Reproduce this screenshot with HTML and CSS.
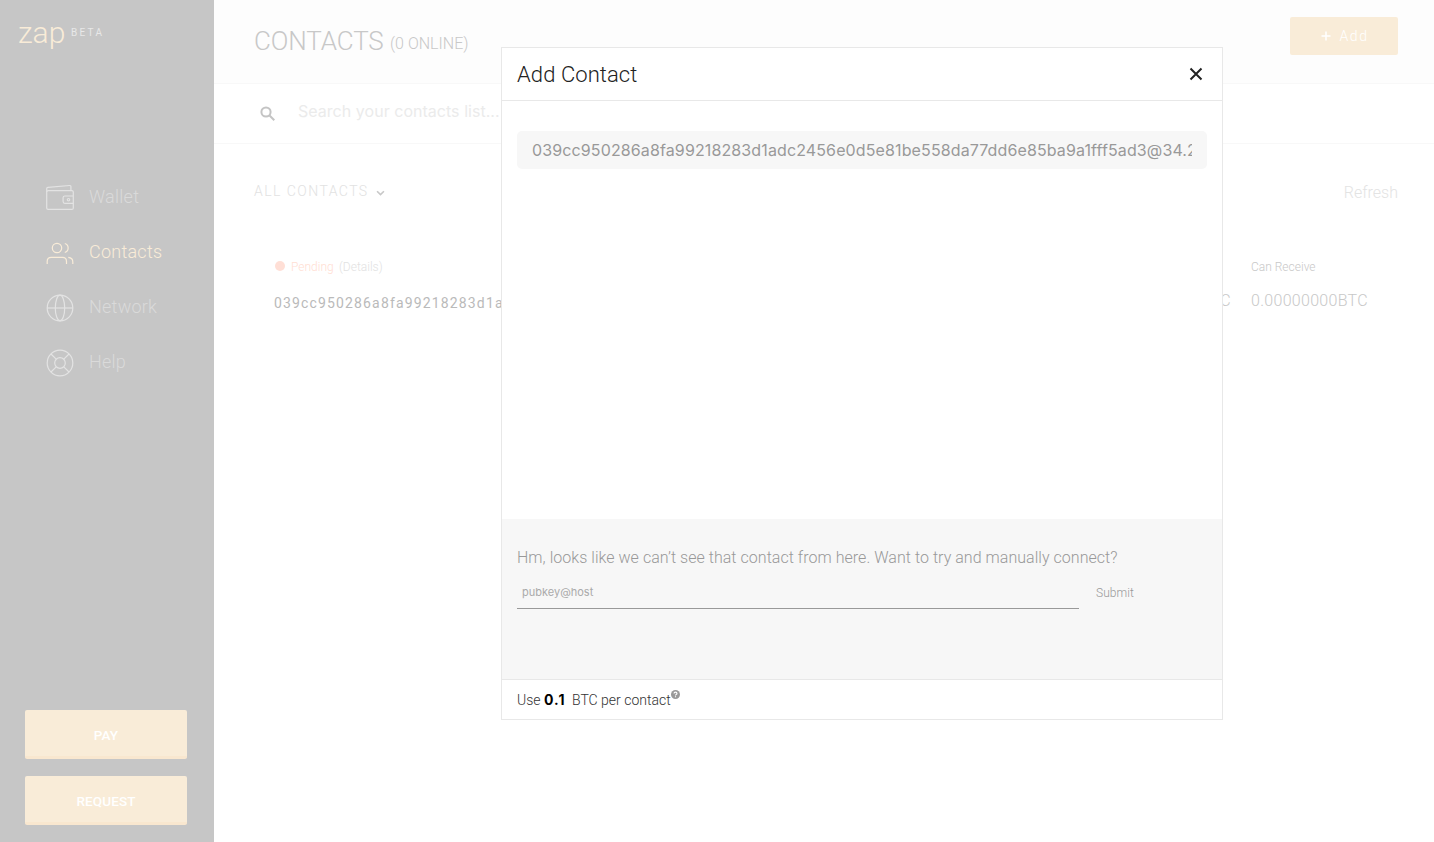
FILE: index.html
```html
<!DOCTYPE html>
<html lang="en">
<head>
<meta charset="utf-8">
<title>Zap</title>
<link rel="stylesheet" href="styles.css">
</head>
<body>
<div class="app">
  <aside class="sidebar">
    <div class="brand"><span class="brand-name">zap</span><span class="brand-tag">BETA</span></div>
    <nav class="nav">
      <a class="nav-item">
        <svg class="nav-icon" viewBox="0 0 28 28"><rect x="0.7" y="6.600" width="26.600" height="18.800" rx="1.5"/><path d="M0.700 8V4.800Q0.700 3.500 2 3.400L23.500 1.500Q24.900 1.400 24.900 2.600V6.600"/><path d="M27.300 12h-8.400q-1.800 0-1.800 1.800v3.800q0 1.800 1.800 1.800h8.400"/><circle cx="22.500" cy="15.700" r="1.200"/></svg>
        <span class="nav-label">Wallet</span>
      </a>
      <a class="nav-item active">
        <svg class="nav-icon" viewBox="0 0 28 28"><circle cx="11" cy="9" r="4.700"/><path d="M1.200 25v-2.600q0-4 4-4H16.500q4 0 4 4V25"/><path d="M18.800 4.500a4.700 4.700 0 0 1 0 9M22.300 18.400q4.500 0.500 4.500 4.500V25"/></svg>
        <span class="nav-label">Contacts</span>
      </a>
      <a class="nav-item">
        <svg class="nav-icon" viewBox="0 0 28 28"><circle cx="14" cy="14" r="12.800"/><path d="M1.200 14h25.600"/><ellipse cx="14" cy="14" rx="4.700" ry="12.800"/></svg>
        <span class="nav-label">Network</span>
      </a>
      <a class="nav-item">
        <svg class="nav-icon" viewBox="0 0 28 28"><circle cx="14" cy="14" r="12.800"/><circle cx="14" cy="14" r="5.300"/><path d="M5 5l5.200 5.200M23 5l-5.200 5.200M5 23l5.200-5.200M23 23l-5.200-5.200"/></svg>
        <span class="nav-label">Help</span>
      </a>
    </nav>
    <div class="actions"><div class="action">PAY</div><div class="action">REQUEST</div></div>
  </aside>
  <main class="main">
    <header class="header">
      <h1 class="title">CONTACTS</h1><span class="online">(0 ONLINE)</span>
      <div class="add"><svg class="add-icon" viewBox="0 0 10 10"><path d="M5 0.500v9M0.500 5h9"/></svg><span>Add</span></div>
    </header>
    <div class="search">
      <svg class="search-icon" viewBox="0 0 16 16"><circle cx="6" cy="6" r="4.600"/><path d="M9.300 9.300l5 5"/></svg>
      <span class="search-text">Search your contacts list...</span>
    </div>
    <div class="filters">
      <span class="filter">ALL CONTACTS</span>
      <svg class="chevron" viewBox="0 0 10 6"><path d="M1.200 1l3.800 3.800L8.800 1"/></svg>
      <span class="refresh">Refresh</span>
    </div>
    <div class="contact">
      <div class="contact-info">
        <div class="status"><i class="dot"></i><span class="pending">Pending</span><span class="details">(Details)</span></div>
        <div class="pubkey">039cc950286a8fa99218283d1adc2456e0d5e81be558</div>
      </div>
      <div class="limit send"><div class="limit-label">Can Pay</div><div class="limit-value">0.00000000BTC</div></div>
      <div class="limit"><div class="limit-label">Can Receive</div><div class="limit-value">0.00000000BTC</div></div>
    </div>
  </main>
</div>
<section class="modal">
  <header class="modal-header">
    <h2 class="modal-title">Add Contact</h2>
    <svg class="close" viewBox="0 0 14 14"><path d="M1.500 1.500l11 11M12.500 1.500l-11 11"/></svg>
  </header>
  <div class="modal-body">
    <div class="key-field"><div class="key-text">039cc950286a8fa99218283d1adc2456e0d5e81be558da77dd6e85ba9a1fff5ad3@34.2</div></div>
  </div>
  <div class="manual">
    <p class="manual-text">Hm, looks like we can’t see that contact from here. Want to try and manually connect?</p>
    <div class="manual-form"><div class="host">pubkey@host</div><span class="submit">Submit</span></div>
  </div>
  <footer class="modal-footer">
    <span class="use">Use</span><b class="amount">0.1</b><span class="per">BTC per contact</span>
    <svg class="help" viewBox="0 0 8 8"><circle cx="4" cy="4" r="4"/><path d="M2.700 3.200q0-1.300 1.300-1.300t1.300 1.200q0 .600-.800 1-.5.300-.5.800M4 5.600v.900"/></svg>
  </footer>
</section>
</body>
</html>
```
FILE: styles.css
```css
* { box-sizing: border-box; }
body { margin: 0; height: 842px; overflow: hidden; background: #fff; font-family: Roboto, "Liberation Sans", sans-serif; font-weight: 300; white-space: nowrap; }
svg { flex: none; fill: none; stroke: currentColor; }
h1, h2, p { margin: 0; font-weight: 300; }
.app { display: flex; height: 842px; }

.sidebar { display: flex; flex-direction: column; width: 214px; background: #c6c6c6; color: #dadada; }
.brand { display: flex; height: 170px; padding: 15px 0 0 18px; }
.brand-name { width: 53px; font-size: 30px; line-height: 36px; color: #f9ecd8; }
.brand-tag { font-size: 10px; line-height: 12px; padding-top: 12px; letter-spacing: 2.3px; font-weight: 400; color: #e8e8e8; }
.nav { display: flex; flex-direction: column; }
.nav-item { display: flex; align-items: center; gap: 15px; height: 55px; padding-left: 46px; font-size: 18px; letter-spacing: 0.25px; }
.nav-label { padding-bottom: 2px; }
.nav-icon { width: 28px; height: 28px; stroke-width: 1.2; color: #e3e3e3; }
.nav-item.active, .active .nav-icon { color: #f9ecd8; }
.actions { display: flex; flex-direction: column; gap: 17px; margin-top: auto; padding: 0 27px 17px 25px; }
.action { height: 49px; border-radius: 2px; border-bottom: 3px solid #f9e7cf; background: #f9ecd8; color: #fff; font-size: 13.5px; font-weight: 500; line-height: 50px; letter-spacing: 0.1px; text-align: center; }

.main { flex: 1; color: #c8c8c8; }
.header { display: flex; height: 84px; padding: 0 36px 0 40px; border-bottom: 1px solid #f8f8f8; background: #fdfdfd; }
.title { width: 136px; font-size: 26px; line-height: 83px; letter-spacing: -0.1px; }
.online { font-size: 16px; line-height: 87px; }
.add { display: flex; align-items: center; justify-content: center; gap: 8px; width: 108px; height: 38px; margin: 17px 0 0 auto; padding-left: 2px; border-radius: 2px; background: #f9ecd8; color: #fff; font-size: 14px; letter-spacing: 1.6px; }
.add-icon { width: 10px; height: 10px; stroke-width: 1.5; }
.search { display: flex; height: 60px; padding-left: 46px; border-bottom: 1px solid #f8f8f8; }
.search-icon { width: 16px; height: 16px; margin: 22px 22px 0 0; stroke-width: 2; color: #c4c4c4; }
.search-text { font-family: Inter, Roboto, sans-serif; font-size: 16px; font-weight: 400; line-height: 55px; letter-spacing: 0.03px; color: #ebebeb; }
.filters { display: flex; align-items: center; height: 96px; padding: 0 36px 0 40px; }
.filter { width: 122px; padding-bottom: 2px; font-size: 14px; letter-spacing: 1.45px; color: #e2e2e2; }
.chevron { width: 9px; height: 6px; margin-top: 1px; stroke-width: 1.8; }
.refresh { margin-left: auto; font-size: 16px; color: #e3e3e3; }
.contact { display: flex; padding: 20px 36px 0 60px; }
.contact-info { flex: 1; min-width: 0; margin-top: -1px; overflow: hidden; }
.status { display: flex; align-items: center; height: 15px; font-size: 12px; color: #e2e2e2; }
.dot { width: 10px; height: 10px; margin: -2px 6px 0 1px; border-radius: 50%; background: #ffdfd6; }
.pending { width: 48px; color: #ffded3; }
.pubkey { margin-top: 20px; font-size: 14px; font-weight: 400; line-height: 18px; letter-spacing: 1.15px; color: #bababa; }
.limit { width: 147px; }
.limit.send { width: 137px; }
.limit-label { font-size: 12px; line-height: 15px; }
.limit-value { margin-top: 15px; font-size: 16px; line-height: 22px; letter-spacing: 0.3px; }

.modal { position: absolute; left: 501px; top: 47px; display: flex; flex-direction: column; width: 722px; height: 673px; border: 1px solid #e8e8e8; background: #fff; }
.modal-header { display: flex; align-items: center; justify-content: space-between; height: 53px; padding: 0 19px 0 15px; border-bottom: 1px solid #e8e8e8; color: #222; }
.modal-title { font-size: 22px; letter-spacing: 0.08px; }
.close { width: 14px; height: 14px; stroke-width: 2; }
.modal-body { flex: 1; padding: 30px 15px; }
.key-field { height: 38px; padding: 0 15px; border-radius: 5px; background: #f7f7f7; }
.key-text { overflow: hidden; font-family: Inter, Roboto, sans-serif; font-size: 16px; font-weight: 400; line-height: 38px; letter-spacing: 0.12px; color: #999; }
.manual { height: 160px; padding: 28px 15px 0; background: #f7f7f7; color: #999; }
.manual-text { font-size: 16px; line-height: 22px; letter-spacing: 0.04px; }
.manual-form { display: flex; gap: 17px; margin-top: 8px; }
.host { width: 562px; height: 32px; padding-left: 5px; border-bottom: 1px solid #999; font-family: Inter, Roboto, sans-serif; font-size: 11px; font-weight: 400; line-height: 31px; color: #aaa; }
.submit { font-size: 12px; line-height: 33px; letter-spacing: 0.08px; }
.modal-footer { display: flex; align-items: center; height: 40px; padding-left: 15px; border-top: 1px solid #e8e8e8; font-size: 14px; color: #333; }
.use { width: 27px; }
.amount { width: 28px; font-family: Inter, Roboto, sans-serif; font-weight: 700; letter-spacing: 1px; color: #000; }
.help { width: 9px; height: 9px; margin-top: -10px; color: #999; }
.help circle { fill: #999; stroke: none; }
.help path { stroke: #fff; stroke-width: 1; }
```
